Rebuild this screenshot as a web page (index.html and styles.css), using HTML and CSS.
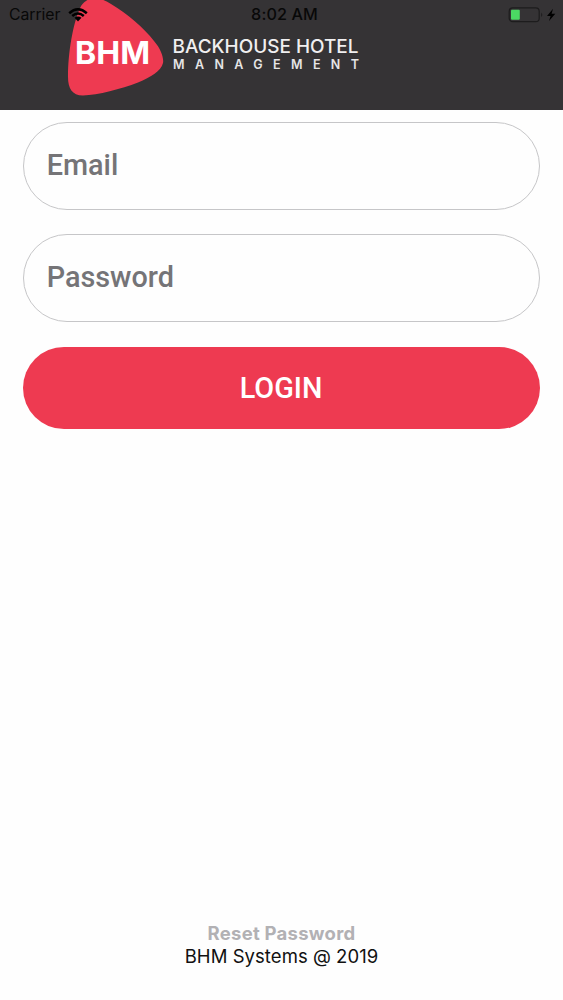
FILE: index.html
```html
<!DOCTYPE html>
<html lang="en">
<head>
<meta charset="utf-8">
<title>Backhouse Hotel Management</title>
<link rel="stylesheet" href="styles.css">
</head>
<body>
<div class="screen">
  <header class="header">
    <svg class="logo" viewBox="0 0 300 97" role="img" aria-label="BHM Backhouse Hotel Management">
      <path class="logo-mark" d="M26 1C32 -4 42 -2 51 4C68 14 84 28 94 41C101 49 104 58 103 63C101 71 91 77 78 82.500C61 89 38 95 23 95.500C12 95.500 8 88 8 77C8 52 13 24 20 8C22 4 24 2 26 1Z"/>
      <text class="logo-initials" x="15" y="63.500" textLength="75" lengthAdjust="spacingAndGlyphs">BHM</text>
      <text class="logo-name" x="112.500" y="53" textLength="186" lengthAdjust="spacingAndGlyphs">BACKHOUSE HOTEL</text>
      <text class="logo-sub" x="113" y="69.300" textLength="186">MANAGEMENT</text>
    </svg>
    <div class="status">
      <div class="status-left">
        <span class="carrier">Carrier</span>
        <svg class="wifi" viewBox="0 0 20 14"><path d="M1.200 5.200Q10-2.600 18.800 5.200M4.200 8Q10 3 15.800 8" fill="none" stroke="#000" stroke-width="2.500"/><path d="M6.500 9.800Q10 7 13.500 9.800L10 13.400Z"/></svg>
      </div>
      <span class="time">8:02 AM</span>
      <svg class="battery" viewBox="0 0 50 16">
        <rect x="1.200" y=".9" width="30" height="13.800" rx="3.500" fill="none" stroke="#1d1c1d" stroke-width="1.200"/>
        <rect x="3" y="2.800" width="8.800" height="10" rx="1" fill="#4bd863"/>
        <path d="M33.200 5.500q2.200 2.300 0 4.600z" fill="#1d1c1d"/>
        <path d="M45 1.800L39 8.900h3.600L41 14l6.300-7.300h-3.700z"/>
      </svg>
    </div>
  </header>
  <main class="form">
    <div class="field"><span class="email">Email</span></div>
    <div class="field"><span class="password">Password</span></div>
    <div class="login" role="button"><span>LOGIN</span></div>
  </main>
  <footer class="footer">
    <div class="reset">Reset Password</div>
    <div class="copyright">BHM Systems @ 2019</div>
  </footer>
</div>
</body>
</html>
```
FILE: styles.css
```css
* { box-sizing: border-box; }
body { margin: 0; background: #fff; font-family: Roboto, sans-serif; }
.screen { height: 1000px; display: flex; flex-direction: column; overflow: hidden; background: #fefefe; }
.header { position: relative; height: 109.500px; flex: none; background: #353335; padding-left: 60px; }
.logo { display: block; width: 300px; height: 97px; overflow: visible; }
.logo-mark { fill: #ee3a51; }
.logo-initials { font: 700 31.500px Inter, sans-serif; fill: #fff; }
.logo-name { font: 500 18.500px Inter, sans-serif; fill: #f0eff0; }
.logo-sub { font: 600 12.500px Inter, sans-serif; fill: #e6e5e6; }
.status { position: absolute; inset: 0 0 auto 0; height: 29px; padding: 0 5px 0 9px; display: grid; grid-template-columns: 1fr auto 1fr; align-items: center; font: 400 16.200px/29px Inter, sans-serif; color: #080808; }
.status-left { display: flex; align-items: center; gap: 8px; }
.carrier { font-size: 15.800px; letter-spacing: -.05px; }
.wifi { width: 20px; height: 14px; }
.time { font-weight: 500; letter-spacing: .1px; margin-left: 2px; }
.battery { width: 50px; height: 16px; justify-self: end; }
.form { padding: 12.500px 23px 0; display: flex; flex-direction: column; }
.field { height: 88px; margin-bottom: 24.400px; border: 1.500px solid #c6c6c8; border-radius: 44px; padding: 0 22.700px; font-size: 28.800px; font-weight: 500; line-height: 84.500px; color: #757477; }
.login { height: 82.500px; border-radius: 41px; background: #ee3a51; color: #fff; text-align: center; font-size: 28.800px; font-weight: 500; line-height: 82px; padding-right: 1px; }
.footer { margin-top: auto; height: 79.500px; text-align: center; font-family: Inter, sans-serif; }
.reset { font-size: 18.500px; font-weight: 700; line-height: 24px; letter-spacing: .25px; color: #b2b1b4; }
.copyright { font-size: 18.500px; line-height: 23px; letter-spacing: .05px; color: #111; }
```
